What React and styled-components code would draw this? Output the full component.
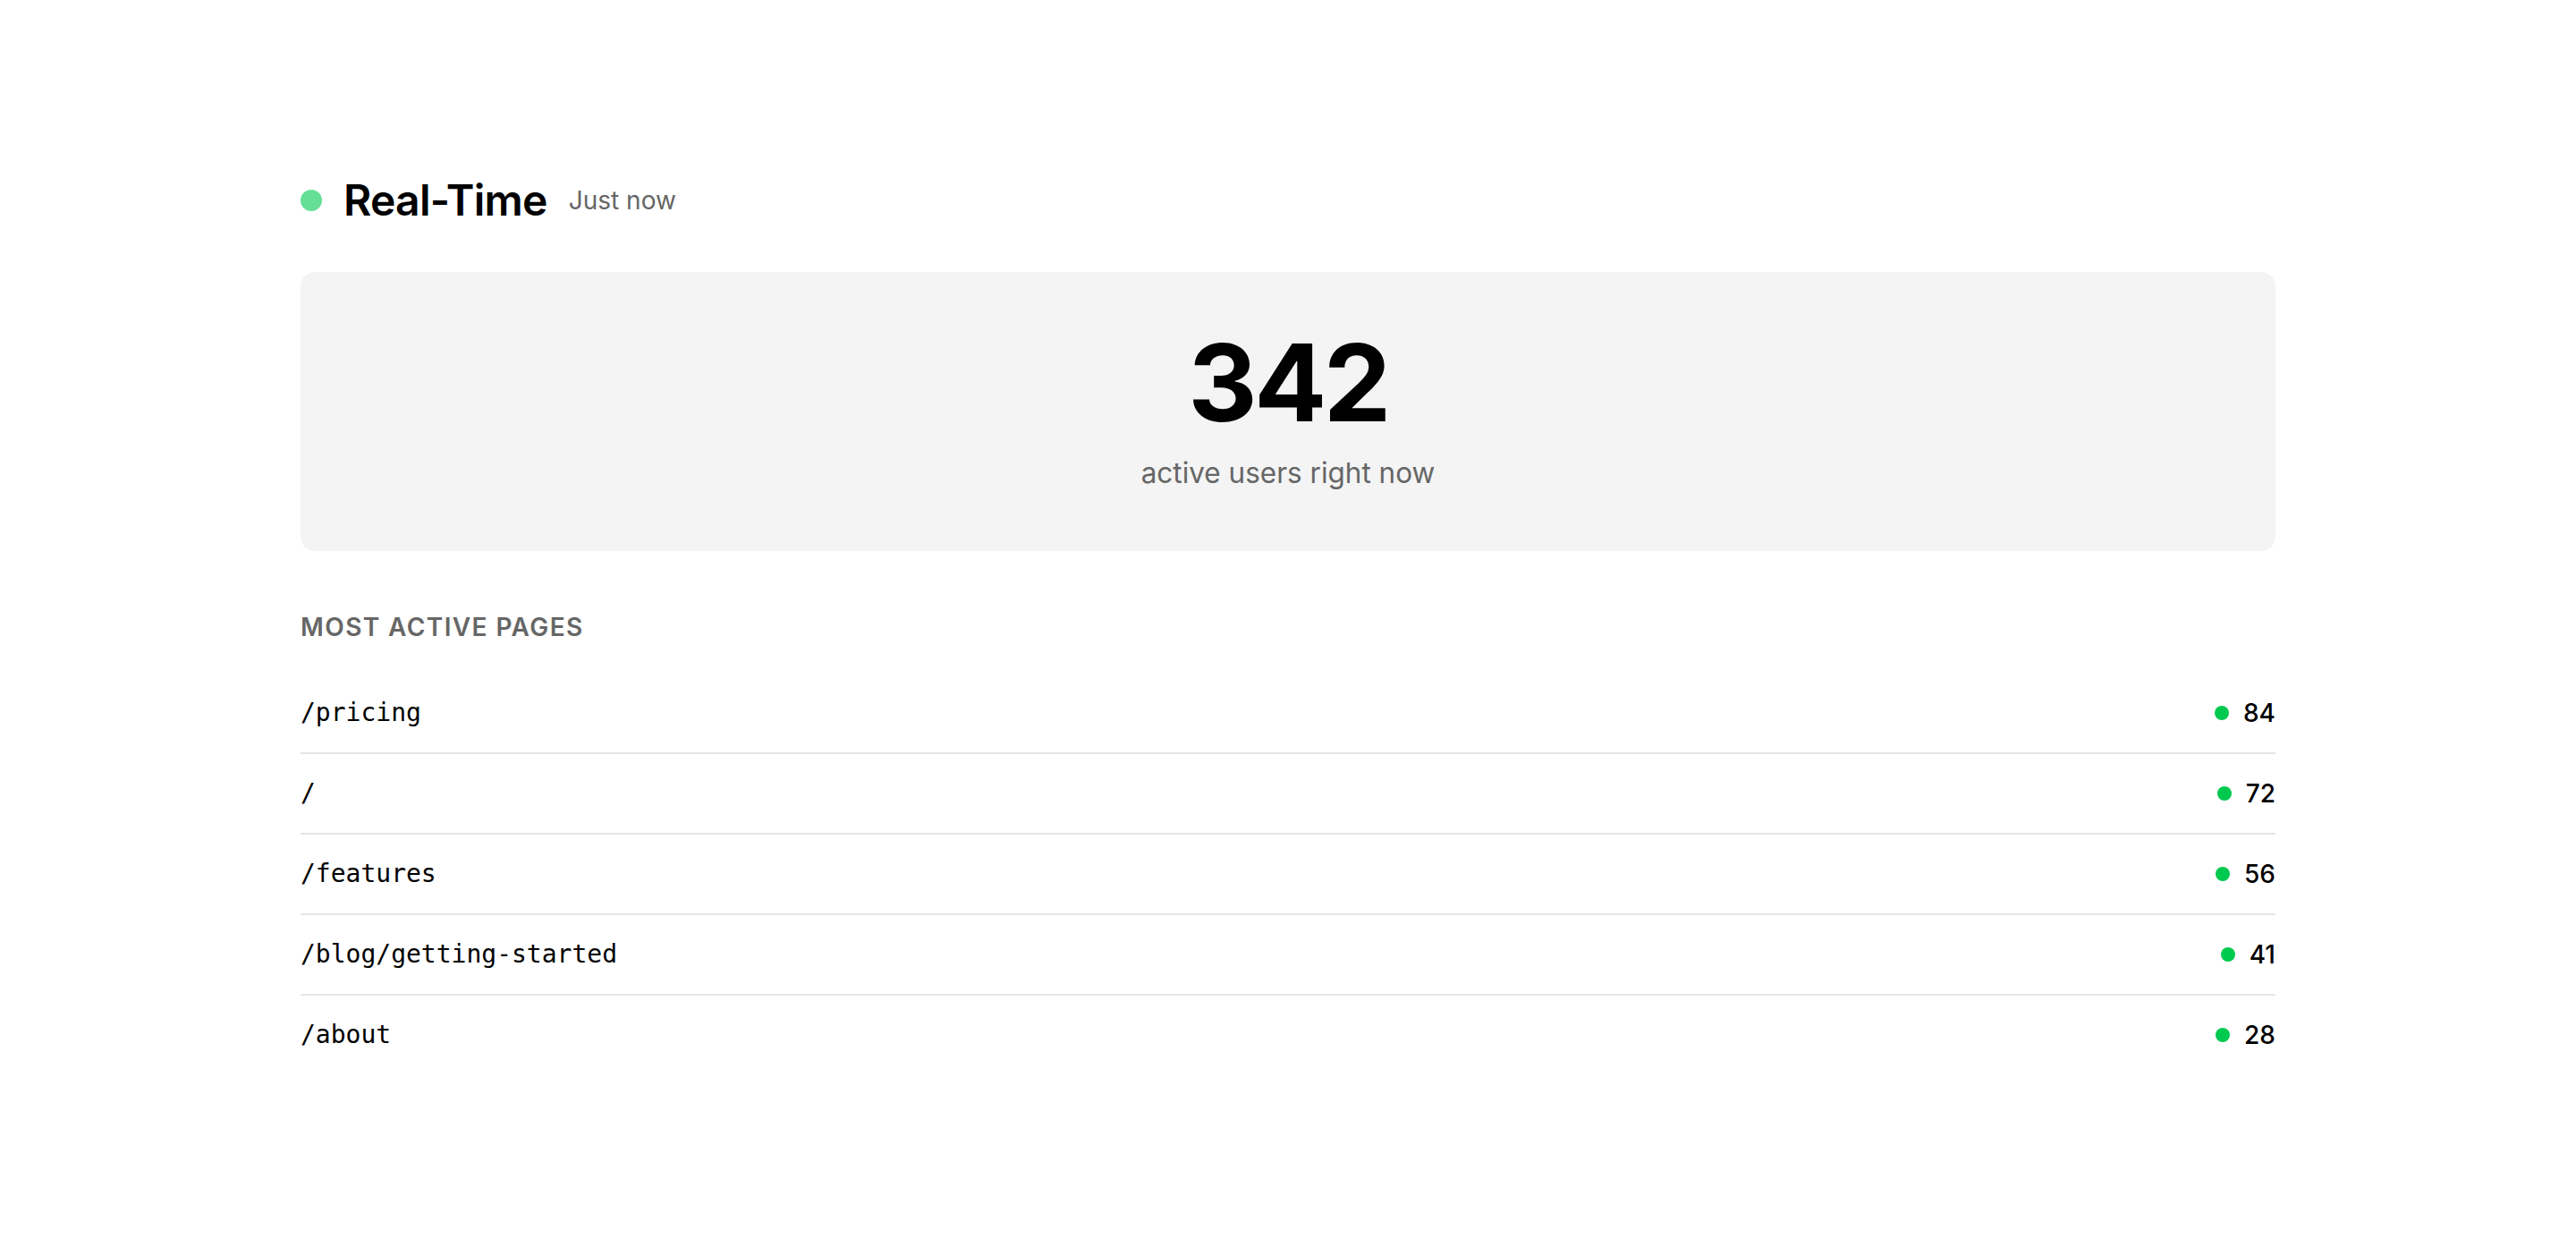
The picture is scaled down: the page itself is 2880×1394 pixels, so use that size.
import React from "react";
import styled, { createGlobalStyle } from "styled-components";

const GlobalStyle = createGlobalStyle`
  * {
    box-sizing: border-box;
  }
  body {
    margin: 0;
    background: #fff;
    font-family: Inter, "Noto Sans", sans-serif;
    color: #000;
  }
`;

const pages = [
  { path: "/pricing", users: 84 },
  { path: "/", users: 72 },
  { path: "/features", users: 56 },
  { path: "/blog/getting-started", users: 41 },
  { path: "/about", users: 28 },
];

const App = () => {
  return (
    <>
      <GlobalStyle />
      <Page>
        <Header>
          <LiveDot />
          <Title>Real-Time</Title>
          <Updated>Just now</Updated>
        </Header>

        <CountCard>
          <Count>342</Count>
          <CountLabel>active users right now</CountLabel>
        </CountCard>

        <SectionTitle>Most Active Pages</SectionTitle>
        <PageList>
          {pages.map((p) => (
            <PageRow key={p.path}>
              <PagePath>{p.path}</PagePath>
              <Users>
                <Dot />
                <UserCount>{p.users}</UserCount>
              </Users>
            </PageRow>
          ))}
        </PageList>
      </Page>
    </>
  );
};

const Page = styled.div`
  max-width: 2208px;
  margin: 0 auto;
  padding-top: 196px;
`;

const Header = styled.div`
  display: flex;
  align-items: center;
  gap: 24px;
  margin-bottom: 52px;
`;

const LiveDot = styled.span`
  width: 24px;
  height: 24px;
  border-radius: 50%;
  background: #00c950;
  opacity: 0.6;
  flex-shrink: 0;
`;

const Title = styled.h2`
  margin: 0;
  font-size: 48px;
  font-weight: 600;
  line-height: 56px;
  letter-spacing: -0.015em;
`;

const Updated = styled.span`
  font-size: 28px;
  color: #666;
  line-height: 1;
`;

const CountCard = styled.div`
  background: #f4f4f4;
  border-radius: 16px;
  padding: 64px;
  text-align: center;
`;

const Count = styled.div`
  font-size: 120px;
  font-weight: 700;
  line-height: 1;
  letter-spacing: -0.03em;
  margin-bottom: 18px;
`;

const CountLabel = styled.div`
  font-size: 31.5px;
  line-height: 46px;
  color: #666;
`;

const SectionTitle = styled.h3`
  margin: 66px 0 32px;
  font-size: 28px;
  font-weight: 600;
  line-height: 39px;
  letter-spacing: 0.05em;
  text-transform: uppercase;
  color: #666;
`;

const PageList = styled.div`
  display: flex;
  flex-direction: column;
`;

const PageRow = styled.div`
  display: flex;
  align-items: center;
  justify-content: space-between;
  padding: 24px 0;
  border-bottom: 2px solid #e5e5e5;

  &:last-child {
    border-bottom: none;
  }
`;

const PagePath = styled.span`
  font-family: "DejaVu Sans Mono", "Liberation Mono", monospace;
  font-size: 28px;
  line-height: 40px;
`;

const Users = styled.div`
  display: flex;
  align-items: center;
  gap: 16px;
`;

const Dot = styled.span`
  width: 16px;
  height: 16px;
  border-radius: 50%;
  background: #00c950;
`;

const UserCount = styled.span`
  font-size: 28px;
  line-height: 40px;
  font-weight: 500;
`;

export default App;
